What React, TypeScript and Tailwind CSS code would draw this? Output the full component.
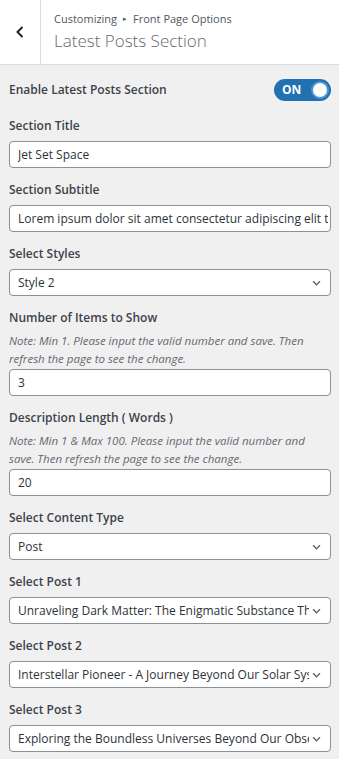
import React from 'react';

type Field =
    | { kind: 'input'; label: string; value: string; note?: string }
    | { kind: 'select'; label: string; value: string };

const fields: Field[] = [
    { kind: 'input', label: 'Section Title', value: 'Jet Set Space' },
    { kind: 'input', label: 'Section Subtitle', value: 'Lorem ipsum dolor sit amet consectetur adipiscing elit tellus' },
    { kind: 'select', label: 'Select Styles', value: 'Style 2' },
    {
        kind: 'input',
        label: 'Number of Items to Show',
        note: 'Note: Min 1. Please input the valid number and save. Then refresh the page to see the change.',
        value: '3',
    },
    {
        kind: 'input',
        label: 'Description Length ( Words )',
        note: 'Note: Min 1 & Max 100. Please input the valid number and save. Then refresh the page to see the change.',
        value: '20',
    },
    { kind: 'select', label: 'Select Content Type', value: 'Post' },
    { kind: 'select', label: 'Select Post 1', value: 'Unraveling Dark Matter: The Enigmatic Substance That Shapes the Universe' },
    { kind: 'select', label: 'Select Post 2', value: 'Interstellar Pioneer - A Journey Beyond Our Solar System' },
    { kind: 'select', label: 'Select Post 3', value: 'Exploring the Boundless Universes Beyond Our Observable Cosmos' },
];

const Chevron = () => (
    <svg width="9" height="6" viewBox="0 0 9 6" fill="none" className="shrink-0 ml-[3px]">
        <path d="M1 1.2l3.5 3.5 3.5-3.5" stroke="#646970" strokeWidth="1.5" />
    </svg>
);

const App: React.FC = () => {
    return (
        <div className="w-[339px] min-h-[759px] bg-[#f0f0f1] font-['Open_Sans',sans-serif] text-[#3c434a]">
            {/* Header */}
            <div className="flex h-[65px] bg-white border-b border-[#dcdcde]">
                <div className="w-[41px] flex items-center justify-center border-r border-[#dcdcde]">
                    <svg width="10" height="14" viewBox="0 0 10 14" fill="none">
                        <path d="M7.5 2L2.5 7l5 5" stroke="#1d2327" strokeWidth="2" />
                    </svg>
                </div>
                <div className="pl-[13px] pt-[10px]">
                    <div className="text-[11px] leading-[18px] text-[#50575e] flex items-center">
                        Customizing
                        <span className="text-[7px] mx-[6px] text-[#50575e]">▸</span>
                        Front Page Options
                    </div>
                    <div className="text-[17px] leading-[28px] font-light text-[#646970] -mt-[1px]">Latest Posts Section</div>
                </div>
            </div>

            {/* Controls */}
            <div className="pl-[9px] pr-[8px] pt-[14px]">
                <div className="flex items-center justify-between h-[22px] mb-[15px]">
                    <span className="text-[12px] font-semibold">Enable Latest Posts Section</span>
                    <div className="w-[57px] h-[22px] rounded-full bg-[#2271b1] flex items-center justify-between pl-[8px] pr-[2px]">
                        <span className="text-white text-[12px] font-bold leading-none">ON</span>
                        <span className="w-[18px] h-[18px] rounded-full bg-white border-2 border-[#4f94d4]" />
                    </div>
                </div>

                {fields.map((f) => (
                    <div key={f.label} className="mb-[12px]">
                        <div className="text-[12px] font-semibold leading-[20px] mb-[5px]">{f.label}</div>
                        {f.kind === 'input' && f.note && (
                            <p className="text-[11.5px] italic leading-[17.5px] text-[#646970] -mt-[1px] mb-[2px] pr-[10px]">
                                {f.note}
                            </p>
                        )}
                        <div
                            className={`h-[27px] bg-white border border-[#8c8f94] rounded-[4px] flex items-center pl-[8px] overflow-hidden ${
                                f.kind === 'select' ? 'pr-[9px]' : 'pr-[2px]'
                            }`}
                        >
                            <span className="flex-1 min-w-0 overflow-hidden whitespace-nowrap text-[12px] text-[#2c3338]">
                                {f.value}
                            </span>
                            {f.kind === 'select' && <Chevron />}
                        </div>
                    </div>
                ))}
            </div>
        </div>
    );
};

export default App;
